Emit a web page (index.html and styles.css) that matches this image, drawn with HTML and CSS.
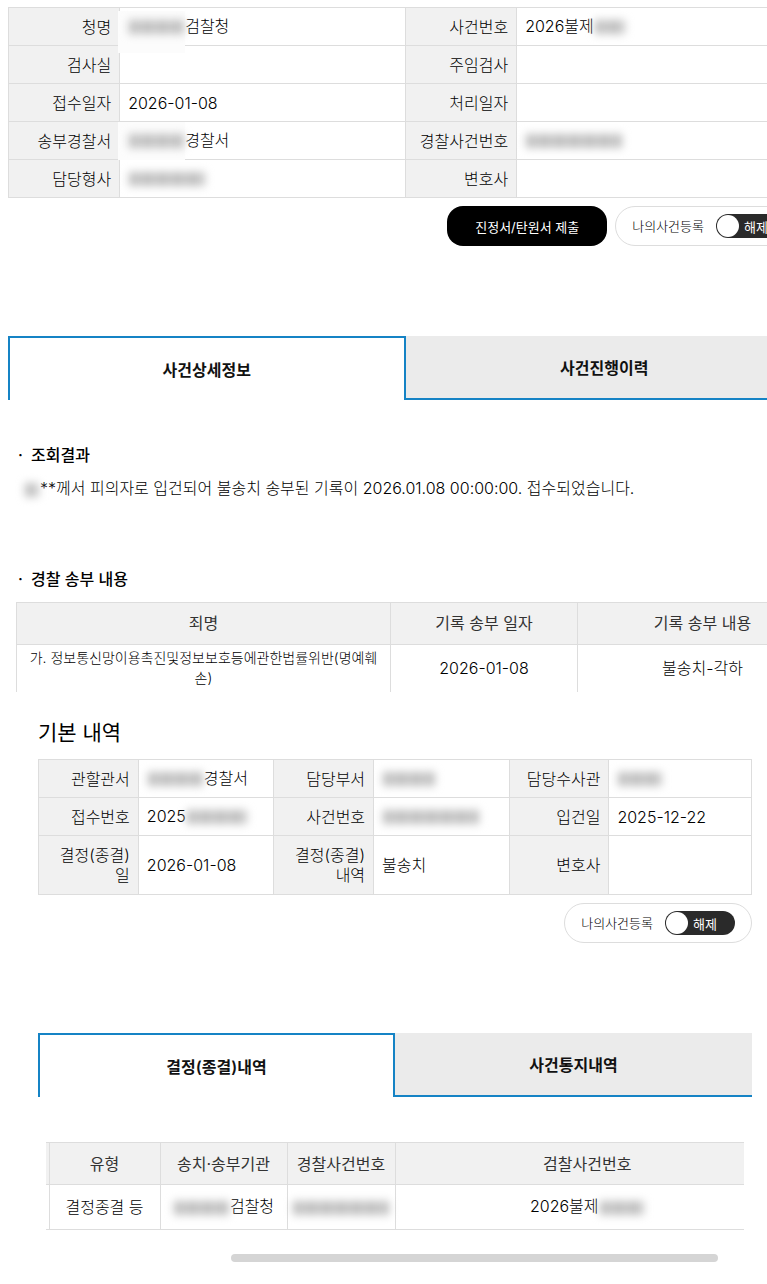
FILE: index.html
```html
<!DOCTYPE html>
<html lang="ko">
<head>
  <meta charset="UTF-8">
  <meta name="viewport" content="width=device-width, initial-scale=1.0">
  <title>사건조회</title>
  <link rel="stylesheet" href="styles.css">
</head>
<body>
  <section class="case">
    <div class="case-inner">
      <table class="info-table">
        <colgroup>
          <col class="col-label"><col class="col-value"><col class="col-label"><col class="col-value">
        </colgroup>
        <tbody>
          <tr>
            <th scope="row">청명</th>
            <td><span class="mask mask-cover"></span>검찰청</td>
            <th scope="row">사건번호</th>
            <td>2026불제<span class="mask mask-short"></span></td>
          </tr>
          <tr>
            <th scope="row">검사실</th>
            <td></td>
            <th scope="row">주임검사</th>
            <td></td>
          </tr>
          <tr>
            <th scope="row">접수일자</th>
            <td>2026-01-08</td>
            <th scope="row">처리일자</th>
            <td></td>
          </tr>
          <tr>
            <th scope="row">송부경찰서</th>
            <td><span class="mask mask-cover-up"></span>경찰서</td>
            <th scope="row">경찰사건번호</th>
            <td><span class="mask mask-long"></span></td>
          </tr>
          <tr>
            <th scope="row">담당형사</th>
            <td><span class="mask mask-name"></span></td>
            <th scope="row">변호사</th>
            <td></td>
          </tr>
        </tbody>
      </table>

      <div class="actions">
        <button type="button" class="btn-submit">진정서/탄원서 제출</button>
        <label class="register" for="register1">
          나의사건등록
          <span class="switch">
            <input type="checkbox" id="register1">
            <span class="switch-text">해제</span>
          </span>
        </label>
      </div>

      <div class="tabs" role="tablist">
        <button type="button" class="tab active" role="tab" aria-selected="true">사건상세정보</button>
        <button type="button" class="tab" role="tab" aria-selected="false">사건진행이력</button>
      </div>

      <div class="detail">
        <h3>조회결과</h3>
        <p><span class="mask mask-char"></span>**께서 피의자로 입건되어 불송치 송부된 기록이 2026.01.08 00:00:00. 접수되었습니다.</p>
        <h3>경찰 송부 내용</h3>
        <table class="list-table send-table">
          <thead>
            <tr>
              <th scope="col" class="w-crime">죄명</th>
              <th scope="col" class="w-date">기록 송부 일자</th>
              <th scope="col">기록 송부 내용</th>
            </tr>
          </thead>
          <tbody>
            <tr>
              <td class="crime">가. 정보통신망이용촉진및정보보호등에관한법률위반(명예훼손)</td>
              <td>2026-01-08</td>
              <td>불송치-각하</td>
            </tr>
          </tbody>
        </table>
      </div>
    </div>
  </section>

  <section class="basic">
    <h2>기본 내역</h2>
    <table class="info-table">
      <colgroup>
        <col class="col-label"><col class="col-basic"><col class="col-label"><col class="col-basic"><col class="col-label"><col>
      </colgroup>
      <tbody>
        <tr>
          <th scope="row">관할관서</th>
          <td><span class="mask"></span>경찰서</td>
          <th scope="row">담당부서</th>
          <td><span class="mask mask-dept"></span></td>
          <th scope="row">담당수사관</th>
          <td><span class="mask mask-officer"></span></td>
        </tr>
        <tr>
          <th scope="row">접수번호</th>
          <td>2025<span class="mask mask-receipt"></span></td>
          <th scope="row">사건번호</th>
          <td><span class="mask mask-long"></span></td>
          <th scope="row">입건일</th>
          <td>2025-12-22</td>
        </tr>
        <tr class="row-tall">
          <th scope="row">결정(종결)일</th>
          <td>2026-01-08</td>
          <th scope="row">결정(종결)내역</th>
          <td>불송치</td>
          <th scope="row">변호사</th>
          <td></td>
        </tr>
      </tbody>
    </table>

    <div class="actions">
      <label class="register" for="register2">
        나의사건등록
        <span class="switch">
          <input type="checkbox" id="register2">
          <span class="switch-text">해제</span>
        </span>
      </label>
    </div>

    <div class="tabs" role="tablist">
      <button type="button" class="tab active" role="tab" aria-selected="true">결정(종결)내역</button>
      <button type="button" class="tab" role="tab" aria-selected="false">사건통지내역</button>
    </div>

    <div class="result">
      <div class="result-scroll">
        <table class="list-table result-table">
          <thead>
            <tr>
              <th class="w-edge"></th>
              <th scope="col" class="w-type">유형</th>
              <th scope="col" class="w-office">송치·송부기관</th>
              <th scope="col" class="w-police">경찰사건번호</th>
              <th scope="col">검찰사건번호</th>
            </tr>
          </thead>
          <tbody>
            <tr>
              <td></td>
              <td>결정종결 등</td>
              <td><span class="mask"></span>검찰청</td>
              <td><span class="mask mask-long"></span></td>
              <td>2026불제<span class="mask mask-mid"></span></td>
            </tr>
          </tbody>
        </table>
      </div>
      <div class="scrollbar"><div class="thumb"></div></div>
    </div>
  </section>
</body>
</html>
```
FILE: styles.css
```css
* {
  box-sizing: border-box;
}

body {
  margin: 0;
  font-family: Inter, "Noto Sans CJK KR", sans-serif;
  font-size: 16px;
  font-weight: 300;
  line-height: 20px;
  color: #000;
  background-color: #fff;
}

table {
  width: 100%;
  border-collapse: collapse;
  table-layout: fixed;
}

button {
  font-family: inherit;
  cursor: pointer;
}

/* Case section, wider than a narrow window */
.case {
  padding: 7px 0 0 8px;
  overflow: hidden;
}

.case-inner {
  min-width: 795px;
}

/* Label / value tables */
.info-table tr {
  height: 38px;
}

.info-table .row-tall {
  height: 59px;
}

.info-table th,
.info-table td {
  padding: 0 8px;
  border: 1px solid #ddd;
  text-align: left;
}

.info-table th {
  background-color: #f1f1f1;
  font-weight: 300;
  text-align: right;
  word-break: break-all;
}

.col-label {
  width: 14%;
}

.col-value {
  width: 36%;
}

.col-basic {
  width: 19%;
}

/* Hidden personal data */
.mask {
  display: inline-block;
  position: relative;
  width: 57px;
  height: 20px;
  vertical-align: middle;
}

.mask::after {
  content: "";
  position: absolute;
  inset: 3px 1px;
  background: repeating-linear-gradient(90deg, #bbb 0, #c4c4c4 9px, #d4d4d4 12px, #bbb 15px);
  filter: blur(4px);
}

.mask-cover::before,
.mask-cover-up::before {
  content: "";
  position: absolute;
  inset: -6px 0 -16px -10px;
  background-color: #fcfcfc;
}

.mask-cover-up::before {
  inset: -9px 0 -9px -10px;
}

.mask-short {
  width: 32px;
}

.mask-mid {
  width: 46px;
}

.mask-long {
  width: 98px;
}

.mask-name {
  width: 78px;
}

.mask-dept {
  width: 54px;
}

.mask-officer {
  width: 46px;
}

.mask-receipt {
  width: 62px;
}

.mask-char {
  width: 16px;
}

/* Buttons under the tables */
.actions {
  display: flex;
  justify-content: flex-end;
  gap: 8px;
  margin-top: 8px;
}

.btn-submit {
  width: 160px;
  height: 40px;
  padding: 0;
  border: 0;
  border-radius: 16px;
  background-color: #000;
  color: #fff;
  font-size: 13px;
  font-weight: 400;
}

.register {
  display: flex;
  align-items: center;
  gap: 12px;
  height: 40px;
  padding: 0 16px;
  border: 1px solid #ddd;
  border-radius: 20px;
  font-size: 13px;
}

.switch {
  position: relative;
  display: flex;
}

.switch input {
  appearance: none;
  width: 70px;
  height: 24px;
  margin: 0;
  border-radius: 12px;
  background-color: #2a2a2a;
}

.switch input::before {
  content: "";
  display: block;
  width: 22px;
  height: 22px;
  margin: 1px;
  border-radius: 50%;
  background-color: #fff;
}

.switch-text {
  position: absolute;
  top: 3px;
  left: 28px;
  color: #fff;
  font-size: 13px;
  font-weight: 400;
}

/* Tabs */
.tabs {
  display: flex;
  margin-top: 90px;
}

.tab {
  width: 50%;
  height: 64px;
  padding: 0;
  border: 0;
  border-bottom: 2px solid #1583c5;
  background-color: #ebebeb;
  color: #111;
  font-size: 16px;
  font-weight: 600;
}

.tab.active {
  border: 2px solid #1583c5;
  border-bottom: 0;
  background-color: #fff;
}

/* Detail tab */
.detail {
  padding: 45px 0 0 8px;
}

.detail h3 {
  margin: 0;
  font-size: 16px;
  font-weight: 500;
}

.detail h3::before {
  content: "·";
  display: inline-block;
  width: 13px;
  padding-left: 2px;
}

.detail p {
  margin: 13px 0 69px;
  padding-left: 8px;
}

.list-table th,
.list-table td {
  padding: 0 8px;
  border: 1px solid #ddd;
  text-align: center;
}

.list-table th {
  height: 42px;
  background-color: #f1f1f1;
  color: #333;
  font-weight: 400;
}

.send-table {
  width: 812px;
  margin-top: 13px;
}

.send-table td {
  height: 48px;
  border-bottom: 0;
}

.list-table .crime {
  font-size: 14px;
  word-break: break-all;
}

.w-crime {
  width: 374px;
}

.w-date {
  width: 187px;
}

/* Basic section */
.basic {
  padding: 26px 15px 22px 38px;
}

.basic h2 {
  margin: 0 0 11px;
  font-size: 21px;
  font-weight: 400;
  line-height: 30px;
}

.result {
  padding: 45px 8px 0;
}

.result-scroll {
  overflow: hidden;
}

.result-table {
  min-width: 734px;
}

.result-table td {
  height: 45px;
}

.result-table th,
.result-table td {
  padding: 0;
}

.result-table tr > :first-child {
  border-left: 0;
}

.w-edge {
  width: 3px;
}

.w-type {
  width: 111px;
}

.w-office {
  width: 127px;
}

.w-police {
  width: 108px;
}

.scrollbar {
  margin-top: 24px;
  padding: 0 26px 0 185px;
}

.thumb {
  height: 8px;
  border-radius: 4px;
  background-color: #d5d5d5;
}
```
